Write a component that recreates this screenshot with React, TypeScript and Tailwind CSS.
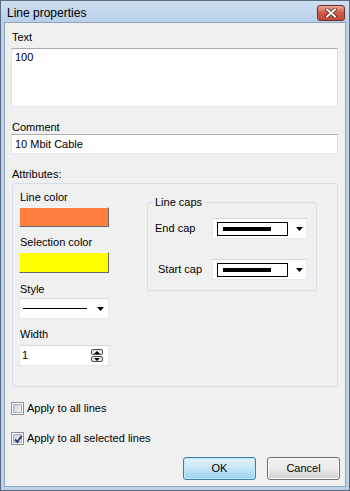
import React from "react";

const font = { fontFamily: '"Liberation Sans", Arial, sans-serif' };

function Arrow() {
  return (
    <svg width="7" height="4" viewBox="0 0 7 4" className="block">
      <path d="M0 0H7L3.5 4Z" fill="#000" />
    </svg>
  );
}

function CapCombo() {
  return (
    <div className="w-[95px] h-[21px] bg-white border border-[#e3e9ef] border-t-[#d5d8de] flex items-center pl-[4px]">
      <div className="w-[71px] h-[14px] border border-black flex items-center pl-[5px] bg-white">
        <div className="w-[48px] h-[4px] bg-black" />
      </div>
      <div className="ml-[8px]">
        <Arrow />
      </div>
    </div>
  );
}

function Checkbox({ checked }: { checked?: boolean }) {
  return (
    <div className="w-[13px] h-[13px] border border-[#8e8f8f] bg-white p-[1px] flex">
      <div className="flex-1 bg-gradient-to-br from-[#cbcfd5] to-[#f6f6f6] border border-[#aeb3b9] relative">
        {checked && (
          <svg width="11" height="11" viewBox="0 0 11 11" className="absolute -left-[1px] -top-[1px]">
            <path d="M2 5.5 L4.3 8 L8.8 1.8" stroke="#2c3e78" strokeWidth="2" fill="none" />
          </svg>
        )}
      </div>
    </div>
  );
}

export default function App() {
  return (
    <div
      style={font}
      className="w-[350px] h-[491px] flex flex-col bg-[#bcd0e9] border border-[#5a6b80] text-[11px] leading-[13px] text-black overflow-hidden"
    >
      {/* Title bar */}
      <div className="h-[21px] flex items-center justify-between bg-gradient-to-b from-[#cfdff1] to-[#b9cee8] pl-[6px] pr-[4px] shrink-0">
        <span className="text-[12px] leading-[14px] text-black mt-[2px]">Line properties</span>
        <div className="w-[28px] h-[16px] mt-[3px] rounded-[3px] border border-[#6b2f2a] bg-gradient-to-b from-[#e8a898] via-[#cf5a48] to-[#c24a3a] flex items-center justify-center">
          <svg width="12" height="10" viewBox="0 0 12 10">
            <path d="M2 1.5 L10 8.5 M10 1.5 L2 8.5" stroke="#4a1d18" strokeWidth="3.4" strokeLinecap="square" />
            <path d="M2 1.5 L10 8.5 M10 1.5 L2 8.5" stroke="#ffffff" strokeWidth="2" strokeLinecap="square" />
          </svg>
        </div>
      </div>

      {/* Client area */}
      <div className="flex-1 mx-[3px] mb-[3px] bg-[#f0f0f0] border border-[#8fa6c2] flex flex-col pl-[6px] pr-[6px]">
        <div className="mt-[8px] ml-[1px]">Text</div>
        <div className="mt-[4px] h-[59px] w-[327px] bg-white border border-[#e3e9ef] border-t-[#abadb3] border-l-[#e2e3ea] border-r-[#dbdfe6] px-[3px] pt-[2px]">
          100
        </div>
        <div className="mt-[14px] ml-[1px]">Comment</div>
        <div className="h-[20px] w-[327px] bg-white border border-[#e3e9ef] border-t-[#abadb3] border-l-[#e2e3ea] border-r-[#dbdfe6] px-[3px] flex items-center">
          10 Mbit Cable
        </div>
        <div className="mt-[14px] ml-[1px]">Attributes:</div>

        {/* Attributes group */}
        <div className="mt-[2px] ml-[1px] w-[326px] h-[204px] border border-[#d5dfe5] rounded-[3px] flex pl-[6px] pt-[7px]">
          <div className="w-[90px] flex flex-col">
            <div className="ml-[1px]">Line color</div>
            <div className="mt-[3px] h-[20px] w-[90px] bg-[#ff7f40] border border-t-[#f4f4f4] border-l-[#f4f4f4] border-r-[#696969] border-b-[#696969]" />
            <div className="mt-[9px] ml-[1px]">Selection color</div>
            <div className="mt-[3px] h-[21px] w-[90px] bg-[#ffff00] border border-t-[#f4f4f4] border-l-[#f4f4f4] border-r-[#696969] border-b-[#696969]" />
            <div className="mt-[10px] ml-[1px]">Style</div>
            <div className="mt-[2px] h-[21px] w-[90px] bg-white border border-[#e3e9ef] border-t-[#d5d8de] flex items-center pl-[3px]">
              <div className="w-[64px] h-[1px] bg-black" />
              <div className="ml-[10px]">
                <Arrow />
              </div>
            </div>
            <div className="mt-[9px] ml-[1px]">Width</div>
            <div className="mt-[4px] h-[21px] w-[90px] bg-white border border-[#e3e9ef] border-t-[#d5d8de] flex items-center pl-[2px] justify-between pr-[5px]">
              <span>1</span>
              <div className="flex flex-col gap-[1px]">
                <div className="w-[12px] h-[6px] border border-[#4d4d4d] rounded-[2px] bg-[#e8e8e8] flex items-center justify-center">
                  <svg width="6" height="3" viewBox="0 0 6 3"><path d="M0 3H6L3 0Z" fill="#000" /></svg>
                </div>
                <div className="w-[12px] h-[6px] border border-[#4d4d4d] rounded-[2px] bg-[#e8e8e8] flex items-center justify-center">
                  <svg width="6" height="3" viewBox="0 0 6 3"><path d="M0 0H6L3 3Z" fill="#000" /></svg>
                </div>
              </div>
            </div>
          </div>

          {/* Line caps group */}
          <div className="ml-[38px] mt-[11px] w-[170px] h-[89px] border border-[#d5dfe5] rounded-[3px] relative flex flex-col pl-[7px] pt-[15px] pr-[9px]">
            <span className="absolute -top-[7px] left-[6px] bg-[#f0f0f0] px-[1px]">Line caps</span>
            <div className="flex items-center justify-between">
              <span>End cap</span>
              <CapCombo />
            </div>
            <div className="mt-[20px] flex items-center justify-between">
              <span className="ml-[3px]">Start cap</span>
              <CapCombo />
            </div>
          </div>
        </div>

        <div className="mt-[15px] flex items-center gap-[3px]">
          <Checkbox />
          <span>Apply to all lines</span>
        </div>
        <div className="mt-[17px] flex items-center gap-[3px]">
          <Checkbox checked />
          <span>Apply to all selected lines</span>
        </div>

        <div className="mt-[12px] flex justify-end gap-[11px] pr-[-1px] mr-[-1px]">
          <div className="w-[73px] h-[23px] rounded-[3px] border border-[#3c7fb1] bg-gradient-to-b from-[#e5f4fc] via-[#c4e5f6] to-[#98d1ef] flex items-center justify-center shadow-[inset_0_0_0_1px_#bfe6f9]">
            OK
          </div>
          <div className="w-[73px] h-[23px] rounded-[3px] border border-[#707070] bg-gradient-to-b from-[#f2f2f2] via-[#ebebeb] to-[#cfcfcf] flex items-center justify-center shadow-[inset_0_0_0_1px_#fcfcfc]">
            Cancel
          </div>
        </div>
      </div>
    </div>
  );
}
